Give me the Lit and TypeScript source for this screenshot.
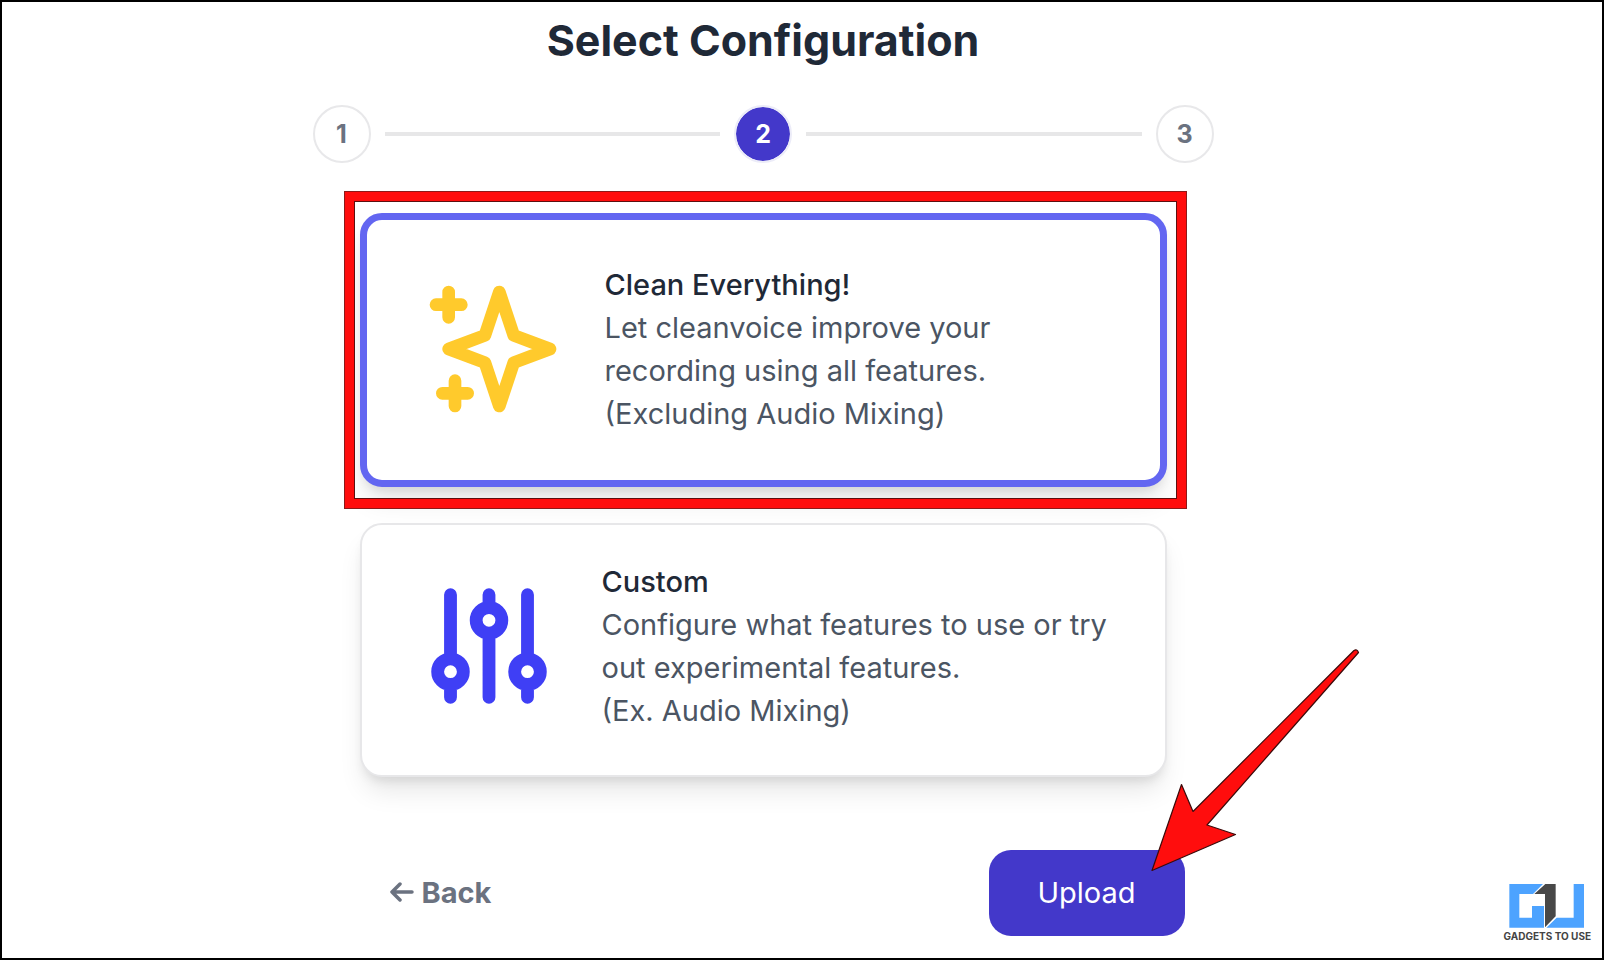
import { LitElement, html, css, svg } from "lit";
import { customElement, state } from "lit/decorators.js";

interface Choice {
  id: string;
  title: string;
  lines: string[];
}

const CHOICES: Choice[] = [
  {
    id: "everything",
    title: "Clean Everything!",
    lines: ["Let cleanvoice improve your", "recording using all features.", "(Excluding Audio Mixing)"],
  },
  {
    id: "custom",
    title: "Custom",
    lines: ["Configure what features to use or try", "out experimental features.", "(Ex. Audio Mixing)"],
  },
];

const ICON_PATHS: Record<string, string> = {
  everything:
    "M5 3v4M3 5h4M6 17v4m-2-2h4m5-16l2.286 6.857L21 12l-5.714 2.143L13 21l-2.286-6.857L5 12l5.714-2.143L13 3z",
  custom:
    "M12 6V4m0 2a2 2 0 100 4m0-4a2 2 0 110 4m-6 8a2 2 0 100-4m0 4a2 2 0 110-4m0 4v2m0-6V4m6 6v10m6-2a2 2 0 100-4m0 4a2 2 0 110-4m0 4v2m0-6V4",
};

@customElement("step-indicator")
export class StepIndicator extends LitElement {
  static styles = css`
    :host {
      display: block;
    }
    .steps {
      display: flex;
      align-items: center;
      gap: 14px;
      margin: 0;
      padding: 0;
      list-style: none;
    }
    .step {
      box-sizing: border-box;
      display: grid;
      place-items: center;
      flex: none;
      width: 58px;
      height: 58px;
      border: 2px solid #e8e8ea;
      border-radius: 50%;
      color: #6b7280;
      font-size: 25px;
      font-weight: 700;
      line-height: 32px;
    }
    .current {
      border-color: #ececf8;
      background: #4338ca;
      background-clip: padding-box;
      color: #fff;
    }
    .line {
      flex: 1;
      height: 4px;
      background: #e7e7e8;
    }
  `;

  render() {
    return html`
      <ol class="steps">
        <li class="step">1</li>
        <li class="line" role="presentation"></li>
        <li class="step current" aria-current="step">2</li>
        <li class="line" role="presentation"></li>
        <li class="step">3</li>
      </ol>
    `;
  }
}

@customElement("app-root")
export class AppRoot extends LitElement {
  @state() private selected = "everything";

  static styles = css`
    :host {
      display: block;
      font-family: Inter, "Liberation Sans", sans-serif;
      color: #1f2937;
    }
    .page {
      position: relative;
      box-sizing: border-box;
      min-height: 100vh;
      padding: 12px 78px 16px 0;
      border: 2px solid #000;
      background: #fff;
    }
    .wizard {
      max-width: 901px;
      margin: 0 auto;
    }
    .heading {
      margin: 0 0 39px;
      font-size: 43px;
      font-weight: 700;
      line-height: 52px;
      text-align: center;
    }
    .choices {
      display: flex;
      flex-direction: column;
      gap: 36px;
      margin: 50px 47px 0;
    }
    .slot {
      position: relative;
      display: grid;
    }
    .card {
      box-sizing: border-box;
      display: flex;
      align-items: center;
      gap: 36px;
      min-height: 254px;
      padding: 34px 50px 42px;
      border: 2px solid #e7e7e9;
      border-radius: 22px;
      background: #fff;
      box-shadow: 0 18px 27px -5px rgb(0 0 0 / 10%), 0 7px 11px -4px rgb(0 0 0 / 10%);
      color: #4b5563;
      font: inherit;
      font-size: 29px;
      line-height: 43px;
      text-align: left;
      cursor: pointer;
    }
    .selected {
      min-height: 274px;
      padding: 43px 50px 45px;
      border: 7px solid #6366f1;
    }
    .icon {
      flex: none;
      fill: none;
      stroke-width: 2;
      stroke-linecap: round;
      stroke-linejoin: round;
    }
    .everything {
      width: 152px;
      height: 152px;
      stroke: #ffca2c;
    }
    .custom {
      width: 154px;
      height: 154px;
      stroke: #3f3ff5;
    }
    .row {
      display: block;
      white-space: nowrap;
    }
    .title {
      color: #1f2937;
      font-weight: 500;
    }
    .highlight {
      position: absolute;
      inset: -21px -19px -21px -15px;
      border: 9px solid #ff0d0d;
      box-shadow: 0 0 0 1px #8c1a1a, inset 0 0 0 1px #5c1010;
      pointer-events: none;
    }
    .actions {
      display: flex;
      align-items: center;
      justify-content: space-between;
      margin: 73px 29px 0 77px;
    }
    .back {
      display: flex;
      align-items: center;
      gap: 8px;
      padding: 0 0 2px;
      border: 0;
      background: none;
      color: #6b7280;
      font: inherit;
      font-size: 29px;
      font-weight: 700;
      line-height: 43px;
      cursor: pointer;
    }
    .back-icon {
      width: 24px;
      height: 24px;
      fill: none;
      stroke: currentColor;
      stroke-width: 3.5;
      stroke-linecap: round;
      stroke-linejoin: round;
    }
    .submit {
      position: relative;
    }
    .upload {
      display: block;
      width: 196px;
      height: 86px;
      padding: 0 0 2px;
      border: 0;
      border-radius: 22px;
      background: #4338ca;
      color: #fff;
      font: inherit;
      font-size: 29px;
      line-height: 43px;
      cursor: pointer;
    }
    .pointer {
      position: absolute;
      right: -180px;
      bottom: 57px;
      width: 220px;
      height: 235px;
      pointer-events: none;
    }
    .brand {
      position: absolute;
      right: 11px;
      bottom: 16px;
      display: grid;
      justify-items: center;
      gap: 2px;
      color: #444;
      font-size: 10px;
      font-weight: 700;
      line-height: 12px;
    }
    .mark {
      width: 76px;
      height: 44px;
    }
  `;

  private renderChoice(choice: Choice) {
    const active = this.selected === choice.id;
    return html`
      <div class="slot">
        <button
          class="card ${active ? "selected" : ""}"
          type="button"
          aria-pressed=${active ? "true" : "false"}
          @click=${() => (this.selected = choice.id)}
        >
          <svg class="icon ${choice.id}" viewBox="0 0 24 24" aria-hidden="true">
            ${svg`<path d=${ICON_PATHS[choice.id]}></path>`}
          </svg>
          <span>
            <span class="row title">${choice.title}</span>
            ${choice.lines.map((line) => html`<span class="row">${line}</span>`)}
          </span>
        </button>
        ${active ? html`<div class="highlight"></div>` : ""}
      </div>
    `;
  }

  render() {
    return html`
      <main class="page">
        <div class="wizard">
          <h1 class="heading">Select Configuration</h1>
          <step-indicator></step-indicator>
          <div class="choices">${CHOICES.map((choice) => this.renderChoice(choice))}</div>
          <div class="actions">
            <button class="back" type="button">
              <svg class="back-icon" viewBox="0 0 24 24" aria-hidden="true">
                <path d="M22 12H2M10 4L2 12l8 8"></path>
              </svg>
              Back
            </button>
            <div class="submit">
              <button class="upload" type="button">Upload</button>
              <svg class="pointer" viewBox="1145 645 220 235" aria-hidden="true">
                <path
                  d="M1152 871.500L1181.500 785.500L1193 812.500L1354 651.500Q1357 649.500 1358.500 653.500L1207 826L1235.500 835.500Z"
                  fill="#ff0d0d"
                  stroke="#3a0a0a"
                  stroke-width="1.200"
                  stroke-linejoin="round"
                ></path>
              </svg>
            </div>
          </div>
        </div>
        <div class="brand">
          <svg class="mark" viewBox="91 75 228 132" aria-hidden="true">
            <path fill="#4da3ff" d="M92 75H193L163 105H122V176H160V141H196V206H92Z"></path>
            <path fill="#484848" d="M200 75H231V172L199 205V105H167Z"></path>
            <path fill="#4da3ff" d="M285 75H316V206H203L234 176H285Z"></path>
          </svg>
          <span>GADGETS TO USE</span>
        </div>
      </main>
    `;
  }
}
